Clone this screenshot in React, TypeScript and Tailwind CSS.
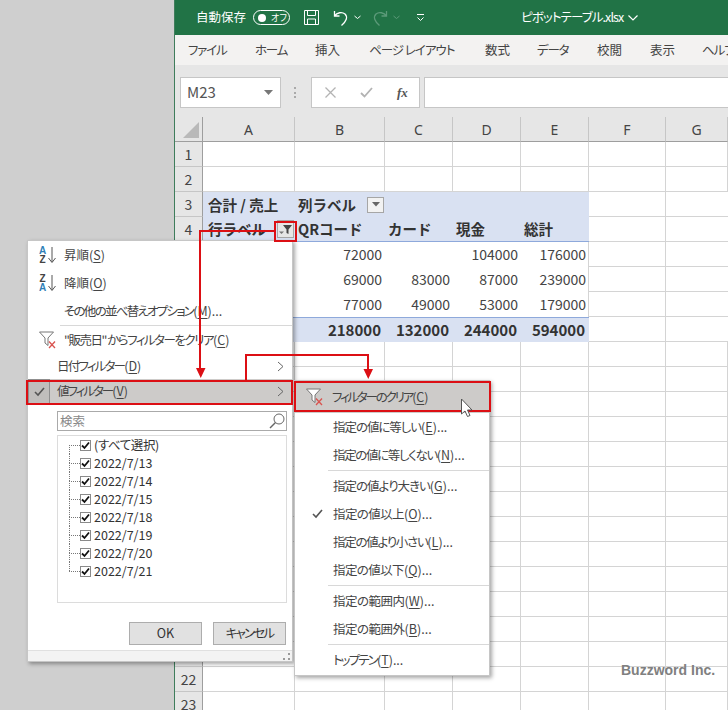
import React from 'react';

const font = "font-['Noto_Sans_CJK_JP','Noto_Sans',sans-serif] [font-feature-settings:'palt']";

const tabs = [
  { label: 'ファイル', w: 'w-[67px]', t: 'tracking-[-1.2px]' },
  { label: 'ホーム', w: 'w-[60px]', t: 'tracking-[-1.2px]' },
  { label: '挿入', w: 'w-[54px]', t: '' },
  { label: 'ページ レイアウト', w: 'w-[116px]', t: 'tracking-[-1px]' },
  { label: '数式', w: 'w-[52px]', t: '' },
  { label: 'データ', w: 'w-[60px]', t: 'tracking-[-1.2px]' },
  { label: '校閲', w: 'w-[53px]', t: '' },
  { label: '表示', w: 'w-[52px]', t: '' },
  { label: 'ヘルプ', w: 'w-[40px]', t: 'tracking-[-1px]' },
];

const colHeads = ['A', 'B', 'C', 'D', 'E', 'F', 'G'];
const rowNumbers = Array.from({ length: 23 }, (_, i) => i + 1);

// pivot table cell contents by row number
const pivot: Record<number, string[]> = {
  5: ['', '72000', '', '104000', '176000'],
  6: ['', '69000', '83000', '87000', '239000'],
  7: ['', '77000', '49000', '53000', '179000'],
  8: ['', '218000', '132000', '244000', '594000'],
};

const dates = ['2022/7/13', '2022/7/14', '2022/7/15', '2022/7/18', '2022/7/19', '2022/7/20', '2022/7/21'];

// menu label with its underlined access key; tracking only squeezes the kana part
const Key = ({ label, k, dots, t = '' }: { label: string; k: string; dots?: boolean; t?: string }) => (
  <span className="whitespace-nowrap">
    <span className={t}>{label}</span>(<u className="underline-offset-2">{k}</u>){dots ? '...' : ''}
  </span>
);

const FunnelX = () => (
  <svg width="18" height="18" viewBox="0 0 18 18" fill="none">
    <path d="M.5 1h14L9 7v7.500L6 12V7z" stroke="#777" strokeWidth="1" fill="#fff" />
    <path d="M10 10.500l6 6.500M16 10.500l-6 6.500" stroke="#d9534f" strokeWidth="1.300" />
  </svg>
);

const SortIcon = ({ top, bottom }: { top: string; bottom: string }) => (
  <div className="flex items-center gap-[2px]">
    <div className="flex w-[7px] flex-col items-center font-['Liberation_Sans',sans-serif] text-[10px] font-bold leading-[9px]">
      <span className={top === 'A' ? 'text-[#2f7fb8]' : 'text-[#444]'}>{top}</span>
      <span className={bottom === 'A' ? 'text-[#2f7fb8]' : 'text-[#444]'}>{bottom}</span>
    </div>
    <svg width="8" height="18" viewBox="0 0 8 18" fill="none">
      <path d="M4 1v15M.5 12L4 16.500 7.500 12" stroke="#555" strokeWidth="1" />
    </svg>
  </div>
);

const CheckBox = () => (
  <span className="flex h-[11px] w-[11px] shrink-0 items-center justify-center border border-[#8a8a8a] bg-white">
    <svg width="9" height="9" viewBox="0 0 9 9" fill="none">
      <path d="M1 4.500l2.500 2.500L8 1.500" stroke="#111" strokeWidth="1.800" />
    </svg>
  </span>
);

const Chevron = () => (
  <svg width="7" height="11" viewBox="0 0 7 11" fill="none">
    <path d="M1 1l5 4.500-5 4.500" stroke="#666" strokeWidth="1" />
  </svg>
);

const DropBtn = ({ filtered, className }: { filtered?: boolean; className: string }) => (
  <div className={`flex shrink-0 items-center justify-center border border-[#a6a6a6] ${className}`}>
    {filtered ? (
      <svg width="15" height="13" viewBox="0 0 15 13" fill="none">
        <path d="M5 2h9L10.500 6.500V11L8.500 10V6.500z" fill="#444" />
        <path d="M1 8.500h5L3.500 11z" fill="#777" />
      </svg>
    ) : (
      <svg width="8" height="5" viewBox="0 0 8 5"><path d="M0 0h8L4 4.500z" fill="#666" /></svg>
    )}
  </div>
);

const SubItem = ({ label, k, checked, t }: { label: string; k: string; checked?: boolean; t: string }) => (
  <div className="relative flex h-[28px] items-center pl-[38px]">
    {checked && (
      <svg className="absolute left-[17px] top-[9px]" width="11" height="10" viewBox="0 0 11 10" fill="none">
        <path d="M1 5l3 3 6-7" stroke="#555" strokeWidth="1.600" />
      </svg>
    )}
    <Key label={label} k={k} dots t={t} />
  </div>
);

const Sep = ({ className }: { className: string }) => <div className={`h-px bg-[#d8d8d8] ${className}`} />;

const PivotHead = ({ row }: { row: number }) => {
  const bold = 'flex items-center whitespace-nowrap bg-[#d9e1f2] text-[14.500px] font-bold text-[#333] [font-feature-settings:normal]';
  if (row === 3) {
    return (
      <>
        <div className={`${bold} pl-[5px]`}>合計 / 売上</div>
        <div className={`${bold} pl-[3px]`}>列ラベル<DropBtn className="ml-auto mr-[1px] h-[16px] w-[17px] bg-[#f2f2f2]" /></div>
        <div className={bold} />
        <div className={bold} />
        <div className={bold} />
        <div className="border-b border-r border-[#d4d4d4]" />
        <div className="border-b border-[#d4d4d4]" />
      </>
    );
  }
  const heads = ['QRコード', 'カード', '現金', '総計'];
  return (
    <>
      <div className={`${bold} border-b border-[#8ea9db] pl-[5px]`}>行ラベル<DropBtn filtered className="ml-auto mr-[1px] h-[18px] w-[17px] bg-[#e6e6e6]" /></div>
      {heads.map((h) => (
        <div key={h} className={`${bold} border-b border-[#8ea9db] pl-[3px]`}>{h}</div>
      ))}
      <div className="border-b border-r border-[#d4d4d4]" />
      <div className="border-b border-[#d4d4d4]" />
    </>
  );
};

const App = () => {
  return (
    <div className={`relative flex h-[710px] w-[728px] overflow-hidden bg-[#cfcfcf] text-[#444] ${font}`}>
      {/* window */}
      <div className="ml-[174px] flex min-w-0 flex-1 flex-col border-l border-[#3f7d5c] bg-white">
        {/* title bar */}
        <div className="flex h-[35px] shrink-0 items-center bg-[#217346] text-white">
          <span className="ml-[21px] text-[12.500px]">自動保存</span>
          <div className="ml-[7px] flex h-[15px] w-[37px] items-center rounded-full border border-white pl-[4px]">
            <span className="h-[8px] w-[8px] rounded-full bg-white" />
            <span className="ml-[5px] text-[9px] leading-none">オフ</span>
          </div>
          <svg className="ml-[13px]" width="17" height="17" viewBox="0 0 17 17" fill="none" stroke="#fff" strokeWidth="1">
            <path d="M1.500 1.500h14v14h-14zM4.500 1.500v5h8v-5M4.500 15.500v-5.500h8v5.500" />
          </svg>
          <svg className="ml-[13px]" width="16" height="18" viewBox="0 0 16 18" fill="none" stroke="#fff" strokeWidth="1.300">
            <path d="M1.500 2v5h5M1.500 7C4 3.500 9 2.500 12 5c3 3 1.500 7-3.500 11.500" />
          </svg>
          <svg className="ml-[5px]" width="7" height="5" viewBox="0 0 7 5" fill="none" stroke="#fff"><path d="M.5 1l3 2.500 3-2.500" /></svg>
          <svg className="ml-[11px]" width="16" height="18" viewBox="0 0 16 18" fill="none" stroke="#5c9a79" strokeWidth="1.300">
            <path d="M14.500 2v5h-5M14.500 7C12 3.500 7 2.500 4 5c-3 3-1.500 7 3.500 11.500" />
          </svg>
          <svg className="ml-[5px]" width="7" height="5" viewBox="0 0 7 5" fill="none" stroke="#5c9a79"><path d="M.5 1l3 2.500 3-2.500" /></svg>
          <svg className="ml-[17px]" width="7" height="9" viewBox="0 0 7 9" fill="none" stroke="#fff">
            <path d="M0 1.500h7M.5 4.500l3 3 3-3" />
          </svg>
          <span className="ml-[97px] whitespace-nowrap text-[12.500px] tracking-[-0.9px]">ピボットテーブル.xlsx</span>
          <svg className="ml-[5px]" width="10" height="6" viewBox="0 0 10 6" fill="none" stroke="#fff" strokeWidth="1.200"><path d="M.5.5L5 5 9.500.5" /></svg>
        </div>

        {/* ribbon tabs */}
        <div className="flex h-[30px] shrink-0 items-center overflow-hidden bg-[#f3f2f1] pl-[13px] text-[12.500px]">
          {tabs.map((t) => (
            <span key={t.label} className={`shrink-0 whitespace-pre ${t.w} ${t.t}`}>{t.label}</span>
          ))}
        </div>

        {/* formula bar */}
        <div className="flex h-[52px] shrink-0 items-start bg-[#e6e6e6] pt-[12px]">
          <div className="ml-[5px] flex h-[31px] w-[101px] items-center justify-between border border-[#c6c6c6] bg-white pl-[6px] pr-[7px] text-[15px] text-[#555]">
            M23
            <svg width="9" height="5" viewBox="0 0 9 5"><path d="M0 0h9L4.500 5z" fill="#777" /></svg>
          </div>
          <div className="ml-[13px] mt-[10px] flex h-[11px] w-[3px] flex-col justify-between">
            <span className="h-[2px] w-[2px] bg-[#aaa]" />
            <span className="h-[2px] w-[2px] bg-[#aaa]" />
            <span className="h-[2px] w-[2px] bg-[#aaa]" />
          </div>
          <div className="ml-[14px] flex h-[31px] w-[109px] items-center border border-[#c6c6c6] bg-white">
            <svg className="ml-[13px]" width="11" height="11" viewBox="0 0 11 11" fill="none" stroke="#b3b3b3" strokeWidth="1.300"><path d="M.5.5l10 10M10.500.5l-10 10" /></svg>
            <svg className="ml-[24px]" width="13" height="11" viewBox="0 0 13 11" fill="none" stroke="#b3b3b3" strokeWidth="1.800"><path d="M1 6l3.500 3.500L12 1" /></svg>
            <span className="ml-[24px] font-['Liberation_Serif',serif] text-[13px] font-bold italic leading-none text-[#555]">fx</span>
          </div>
          <div className="ml-[4px] h-[31px] flex-1 border-y border-l border-[#c6c6c6] bg-white" />
        </div>

        {/* sheet grid */}
        <div className="grid grid-cols-[28px_92px_90px_68px_68px_68px_77px_62px] auto-rows-[25px] text-[14px]">
          <div className="relative border-b border-r border-[#9e9e9e] bg-[#e6e6e6]">
            <div className="absolute bottom-[3px] right-[3px] h-0 w-0 border-b-[16px] border-l-[16px] border-b-[#b9b9b9] border-l-transparent" />
          </div>
          {colHeads.map((c) => (
            <div key={c} className="flex items-center justify-center border-b border-r border-b-[#9e9e9e] border-r-[#c6c6c6] bg-[#e6e6e6] font-['Noto_Sans',sans-serif] text-[#444]">{c}</div>
          ))}

          {rowNumbers.map((r) => (
            <React.Fragment key={r}>
              <div className="flex items-center justify-center border-b border-r border-b-[#c6c6c6] border-r-[#9e9e9e] bg-[#e6e6e6] text-[#444]">{r}</div>
              {r === 3 || r === 4 ? (
                <PivotHead row={r} />
              ) : r >= 5 && r <= 8 ? (
                <>
                  {pivot[r].map((v, i) => (
                    <div
                      key={i}
                      className={`flex items-center justify-end ${
                        r === 8
                          ? 'border-t border-[#8ea9db] bg-[#d9e1f2] pr-[4px] text-[15px] font-bold text-[#333]'
                          : i === 4
                            ? 'border-r border-[#d4d4d4] pr-[2px]'
                            : 'pr-[3px]'
                      }`}
                    >
                      {v}
                    </div>
                  ))}
                  <div className="border-b border-r border-[#d4d4d4]" />
                  <div className="border-b border-[#d4d4d4]" />
                </>
              ) : (
                colHeads.map((c) => <div key={c} className="border-b border-r border-[#d4d4d4]" />)
              )}
            </React.Fragment>
          ))}
        </div>
      </div>

      {/* filter menu */}
      <div className="absolute left-[27px] top-[240px] flex h-[422px] w-[266px] flex-col border border-[#c6c6c6] bg-white text-[12.500px] text-[#444] shadow-[2px_2px_4px_rgba(0,0,0,0.35)]">
        <div className="flex h-[28px] items-center pl-[11px]">
          <div className="w-[25px]"><SortIcon top="A" bottom="Z" /></div>
          <Key label="昇順" k="S" />
        </div>
        <div className="flex h-[28px] items-center pl-[11px]">
          <div className="w-[25px]"><SortIcon top="Z" bottom="A" /></div>
          <Key label="降順" k="O" />
        </div>
        <div className="flex h-[28px] items-center pl-[36px]">
          <Key label="その他の並べ替えオプション" k="M" dots t="tracking-[-1.75px]" />
        </div>
        <Sep className="ml-[32px]" />
        <div className="flex h-[28px] items-center pl-[11px]">
          <div className="w-[25px]"><FunnelX /></div>
          <Key label={'"販売日" からフィルターをクリア'} k="C" t="tracking-[-1.5px]" />
        </div>
        <div className="flex h-[25px] items-center justify-between pl-[29px] pr-[8px]">
          <Key label="日付フィルター" k="D" t="tracking-[-1.8px]" />
          <Chevron />
        </div>
        <div className="flex h-[25px] items-center justify-between bg-[#cdcbc9] pr-[8px]">
          <div className="flex h-full items-center">
            <div className="flex h-[25px] w-[22px] items-center justify-center border border-[#8f8f8f] bg-[#c0bebc]">
              <svg width="11" height="10" viewBox="0 0 11 10" fill="none"><path d="M1 5l3 3 6-7" stroke="#555" strokeWidth="1.600" /></svg>
            </div>
            <span className="ml-[7px]"><Key label="値フィルター" k="V" t="tracking-[-2px]" /></span>
          </div>
          <Chevron />
        </div>

        <div className="ml-[29px] mt-[7px] flex h-[20px] w-[230px] items-center justify-between border border-[#aaa] pl-[2px] pr-[1px] text-[#888]">
          検索
          <svg width="16" height="16" viewBox="0 0 16 16" fill="none" stroke="#666" strokeWidth="1">
            <circle cx="10" cy="6" r="5" />
            <path d="M6.500 9.500L1 15" strokeWidth="1.500" />
          </svg>
        </div>
        <div className="ml-[29px] mt-[4px] h-[168px] w-[230px] border border-[#dcdcdc] text-[#333]">
          {['(すべて選択)', ...dates].map((d, i, all) => (
            <div key={d} className="flex h-[18px] items-center pl-[11px]">
              <div className="flex h-full w-[11px] flex-col">
                <div className={`h-[9px] border-[#777] ${i === 0 ? '' : 'border-l border-dotted'}`} />
                <div className={`h-[9px] border-t border-dotted border-[#777] ${i === all.length - 1 ? '' : 'border-l'}`} />
              </div>
              <CheckBox />
              <span className={`ml-[3px] whitespace-nowrap ${i === 0 ? 'tracking-[-0.4px]' : ''}`}>{d}</span>
            </div>
          ))}
        </div>
        <div className="ml-[101px] mt-[19px] flex gap-[11px]">
          <div className="flex h-[23px] w-[73px] items-center justify-center border border-[#adadad] bg-[#e1e1e1] text-[#333]">OK</div>
          <div className="flex h-[23px] w-[73px] items-center justify-center border border-[#adadad] bg-[#e1e1e1] tracking-[-1.8px] text-[#333]">キャンセル</div>
        </div>
        <div className="mt-auto flex h-[11px] items-end justify-end border-t border-[#e0e0e0] bg-[#f3f3f3] pb-[1px] pr-[2px]">
          <svg width="7" height="7" viewBox="0 0 7 7" fill="#999"><path d="M5 0h2v2H5zM0 5h2v2H0zM5 5h2v2H5z" /></svg>
        </div>
      </div>

      {/* value filter submenu */}
      <div className="absolute left-[294px] top-[380px] h-[296px] w-[196px] border border-[#c6c6c6] bg-white text-[12.500px] text-[#444] shadow-[2px_2px_4px_rgba(0,0,0,0.35)]">
        <div className="flex h-[32px] items-center bg-[#cdcbc9] pl-[11px]">
          <div className="w-[26px]"><FunnelX /></div>
          <Key label="フィルターのクリア" k="C" t="tracking-[-2.2px]" />
        </div>
        <SubItem label="指定の値に等しい" k="E" t="tracking-[-1.05px]" />
        <SubItem label="指定の値に等しくない" k="N" t="tracking-[-1.35px]" />
        <Sep className="my-[1px] ml-[33px]" />
        <SubItem label="指定の値より大きい" k="G" t="tracking-[-1px]" />
        <SubItem label="指定の値以上" k="O" checked t="tracking-[-0.6px]" />
        <SubItem label="指定の値より小さい" k="L" t="tracking-[-1.3px]" />
        <SubItem label="指定の値以下" k="Q" t="tracking-[-0.6px]" />
        <Sep className="my-[1px] ml-[33px]" />
        <SubItem label="指定の範囲内" k="W" t="tracking-[-0.5px]" />
        <SubItem label="指定の範囲外" k="B" t="tracking-[-0.5px]" />
        <Sep className="my-[1px] ml-[33px]" />
        <SubItem label="トップテン" k="T" t="tracking-[-1.9px]" />
      </div>

      {/* watermark */}
      <span className="absolute left-[621px] top-[660px] font-['Liberation_Sans',sans-serif] text-[14px] font-bold text-[#808080]">Buzzword Inc.</span>

      {/* red annotation boxes and arrows */}
      <svg className="pointer-events-none absolute left-0 top-0" width="728" height="710" viewBox="0 0 728 710" fill="none">
        <g stroke="#dc0f14" strokeWidth="2">
          <rect x="275" y="222" width="21" height="19" />
          <rect x="27" y="381" width="265" height="23" />
          <rect x="295" y="382" width="195" height="29" />
          <path d="M275 231H200V370M246 381V355H368V370" />
        </g>
        <path d="M196 368h9.500l-4.750 10zM363.500 369h9.500l-4.750 10z" fill="#dc0f14" />
        <path d="M461.500 399v15l3.500-3 2.500 5.500 2.500-1-2.500-5.500h4.500z" fill="#fff" stroke="#555" strokeWidth="1" />
      </svg>
    </div>
  );
};

export default App;
